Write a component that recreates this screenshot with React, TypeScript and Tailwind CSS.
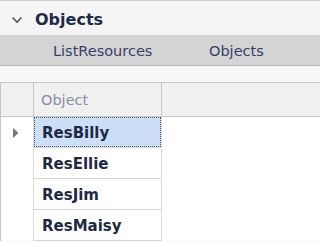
import React from "react";

const rows = ["ResBilly", "ResEllie", "ResJim", "ResMaisy"];

export default function App() {
  return (
    <div
      className="w-full h-[242px] overflow-hidden bg-[#f7f7f7] border-t border-[#cccccc]"
      style={{ fontFamily: '"DejaVu Sans", Verdana, sans-serif' }}
    >
      <div className="h-[34px] flex items-center bg-[#f5f5f5]">
        <svg width="12" height="8" viewBox="0 0 12 8" className="ml-[11px] mt-[3px]">
          <path d="M1.5 1.5 L6 6 L10.5 1.5" fill="none" stroke="#555" strokeWidth="1.6" />
        </svg>
        <span className="ml-[12px] mt-[3px] text-[16px] font-bold text-[#1f2b4a] leading-none">Objects</span>
      </div>
      <div className="h-[31px] flex items-center pt-[3px] bg-[#d4d4d4] border-b border-[#b8b8b8] text-[14.5px] text-[#3b3d6b]">
        <span className="ml-[53px] w-[156px]">ListResources</span>
        <span>Objects</span>
      </div>
      <div className="h-[16px]" />
      <div className="border-t border-l border-[#c8c8c8] bg-white">
        <div className="flex h-[34px] bg-[#f0f0f0] border-b border-[#c8c8c8]">
          <div className="w-[33px] border-r border-[#c8c8c8]" />
          <div className="w-[128px] border-r border-[#c8c8c8] flex items-center pl-[7px] pt-[2px] text-[14.5px] text-[#8a8ca8]">
            Object
          </div>
          <div className="flex-1" />
        </div>
        {rows.map((r, i) => (
          <div key={r} className="flex h-[31px]">
            <div className="w-[33px] border-r border-[#d8d8d8] flex items-center justify-center">
              {i === 0 && (
                <svg width="6" height="10" viewBox="0 0 6 10" className="ml-[-2px] mt-[1px]">
                  <path d="M0 0 L5.5 5 L0 10 Z" fill="#7a7a7a" />
                </svg>
              )}
            </div>
            <div className="w-[128px] border-r border-b border-[#d8d8d8] flex">
              <div
                className={
                  "flex-1 flex items-center pl-[7px] pt-[2px] text-[15px] font-bold text-[#1e2a44] " +
                  (i === 0 ? "bg-[#cddff6] border border-dotted border-[#555]" : "border border-transparent")
                }
              >
                {r}
              </div>
            </div>
            <div className="flex-1" />
          </div>
        ))}
      </div>
    </div>
  );
}
